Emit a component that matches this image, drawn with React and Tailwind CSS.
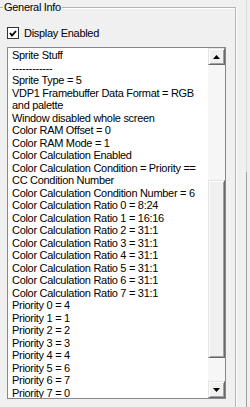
import React from "react";

const lines = [
  "Sprite Stuff",
  "------------",
  "Sprite Type = 5",
  "VDP1 Framebuffer Data Format = RGB",
  "and palette",
  "Window disabled whole screen",
  "Color RAM Offset = 0",
  "Color RAM Mode = 1",
  "Color Calculation Enabled",
  "Color Calculation Condition = Priority ==",
  "CC Condition Number",
  "Color Calculation Condition Number = 6",
  "Color Calculation Ratio 0 = 8:24",
  "Color Calculation Ratio 1 = 16:16",
  "Color Calculation Ratio 2 = 31:1",
  "Color Calculation Ratio 3 = 31:1",
  "Color Calculation Ratio 4 = 31:1",
  "Color Calculation Ratio 5 = 31:1",
  "Color Calculation Ratio 6 = 31:1",
  "Color Calculation Ratio 7 = 31:1",
  "Priority 0 = 4",
  "Priority 1 = 1",
  "Priority 2 = 2",
  "Priority 3 = 3",
  "Priority 4 = 4",
  "Priority 5 = 6",
  "Priority 6 = 7",
  "Priority 7 = 0",
];

function ScrollButton({ up }) {
  return (
    <div className="h-[17px] w-[17px] shrink-0 bg-[#f0f0f0] border-t border-l border-t-[#e3e3e3] border-l-[#e3e3e3] border-r border-b border-r-[#696969] border-b-[#696969] shadow-[inset_1px_1px_0_#ffffff,inset_-1px_-1px_0_#a0a0a0] flex items-center justify-center">
      <svg width="7" height="4" viewBox="0 0 7 4">
        {up ? (
          <path d="M0 4 L3.5 0 L7 4 Z" fill="#000" />
        ) : (
          <path d="M0 0 L7 0 L3.5 4 Z" fill="#000" />
        )}
      </svg>
    </div>
  );
}

export default function App() {
  return (
    <div
      className="w-[250px] h-[407px] bg-[#f0f0f0] overflow-hidden flex items-start text-[11px] text-black tracking-[-0.3px]"
      style={{ fontFamily: '"Liberation Sans", Arial, sans-serif' }}
    >
      <div className="ml-[-2px] w-[238px] shrink-0 flex flex-col">
        <div className="flex items-start h-[14px]">
          <div className="mt-[7px] w-[5px] h-[2px] border-t border-t-[#b4b4b4] border-b border-b-white" />
          <span className="px-[1px] leading-[14px]">General Info</span>
          <div className="mt-[7px] grow h-[2px] border-t border-t-[#b4b4b4] border-b border-b-white" />
        </div>
        <div className="-mt-[7px] pt-[7px] h-[423px] border-r border-[#b4b4b4] shadow-[1px_0_0_#ffffff]">
          <div className="pl-[9px] pt-[13px] flex items-center h-[12px] box-content">
            <div className="w-[12px] h-[12px] bg-white border border-[#333333] flex items-center justify-center shrink-0">
              <svg width="8" height="7" viewBox="0 0 8 7">
                <path d="M1 3 L3 5.5 L7 1" stroke="#000" strokeWidth="1.8" fill="none" />
              </svg>
            </div>
            <span className="ml-[5px] leading-[13px]">Display Enabled</span>
          </div>
          <div className="ml-[9px] mt-[8px] w-[219px] h-[352px] bg-white border border-[#828790] flex">
            <div className="flex-1 pl-[4px] pt-[1px] overflow-hidden">
              {lines.map((l, i) => (
                <div key={i} className="leading-[12.5px] whitespace-nowrap">
                  {l}
                </div>
              ))}
            </div>
            <div className="w-[17px] flex flex-col bg-[#f6f6f6]">
              <ScrollButton up />
              <div className="h-[115px]" />
              <div className="h-[178px] bg-[#f0f0f0] border-t border-l border-t-[#e3e3e3] border-l-[#e3e3e3] border-r border-b border-r-[#696969] border-b-[#696969] shadow-[inset_1px_1px_0_#ffffff,inset_-1px_-1px_0_#a0a0a0]" />
              <div className="flex-1" />
              <ScrollButton />
            </div>
          </div>
        </div>
      </div>
      <div className="ml-[10px] w-px h-[407px] flex flex-col shrink-0">
        <div className="h-[172px] bg-[#dadada]" />
        <div className="flex-1 bg-[#a0a0a0]" />
      </div>
    </div>
  );
}
